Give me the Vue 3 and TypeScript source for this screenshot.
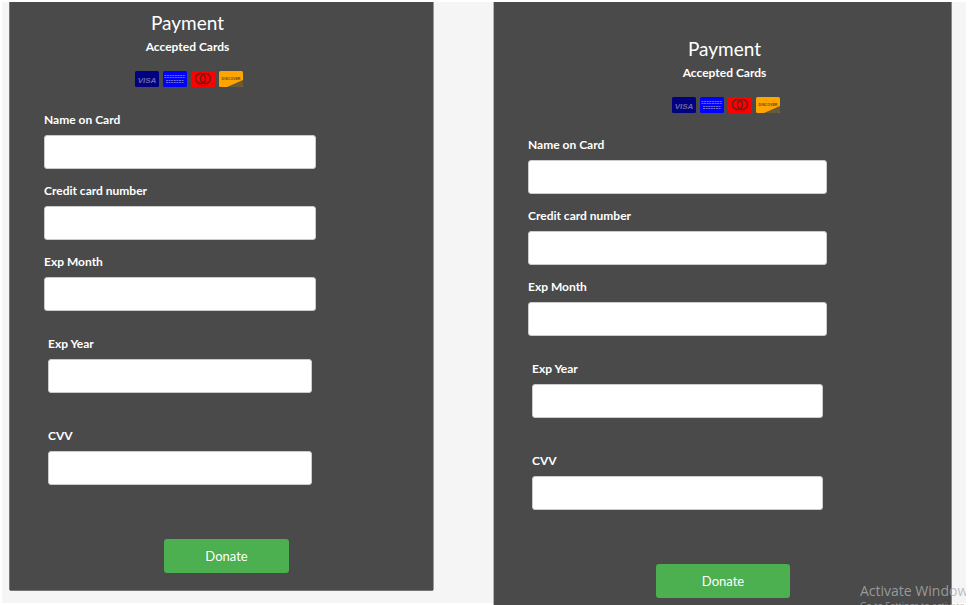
<script setup lang="ts">
interface Field { label: string; inset: boolean; cls: string }
const fields: Field[] = [
  { label: 'Name on Card', inset: false, cls: 'f1' },
  { label: 'Credit card number', inset: false, cls: 'f2' },
  { label: 'Exp Month', inset: false, cls: 'f3' },
  { label: 'Exp Year', inset: true, cls: 'f4' },
  { label: 'CVV', inset: true, cls: 'f5' },
]
const panels = ['left', 'right']
</script>

<template>
  <div class="page">
    <section v-for="p in panels" :key="p" class="panel" :class="p">
      <header class="head">
        <h1 class="title">Payment</h1>
        <p class="sub">Accepted Cards</p>
        <div class="cards">
          <svg class="card" viewBox="0 0 24 16" width="24" height="16">
            <rect width="24" height="16" rx="1.5" fill="#000080" />
            <text x="12" y="11.5" text-anchor="middle" class="visa">VISA</text>
          </svg>
          <svg class="card" viewBox="0 0 24 16" width="24" height="16">
            <rect width="24" height="16" rx="1.5" fill="#0000ff" />
            <path d="M1.5 4.5h21M1.5 6.5h21M3 9.5h18M3 11.5h18" stroke="#6a6ad8" stroke-width="1" stroke-dasharray="2 .6" />
          </svg>
          <svg class="card" viewBox="0 0 24 16" width="24" height="16">
            <rect width="24" height="16" rx="1.5" fill="#ff0000" />
            <circle cx="9.5" cy="7.5" r="5" fill="none" stroke="#6a1a1a" stroke-width="1.3" />
            <circle cx="14.5" cy="7.5" r="5" fill="none" stroke="#6a1a1a" stroke-width="1.3" />
            <path d="M7 14.3h10" stroke="#a01818" stroke-width=".8" />
          </svg>
          <svg class="card" viewBox="0 0 24 16" width="24" height="16">
            <rect width="24" height="16" rx="1.5" fill="#ffa500" />
            <path d="M8 16 24 9v5.5a1.5 1.5 0 0 1-1.5 1.5Z" fill="#6a5a3c" />
            <text x="12" y="8.5" text-anchor="middle" class="disc">DISCOVER</text>
          </svg>
        </div>
      </header>
      <div v-for="f in fields" :key="f.label" class="field" :class="[f.cls, { inset: f.inset }]">
        <label class="label">{{ f.label }}</label>
        <input class="input" type="text" />
      </div>
      <button class="donate" type="button">Donate</button>
    </section>
    <div class="watermark">
      <div class="wm1">Activate Windows</div>
      <div class="wm2">Go to Settings to activate Windows.</div>
    </div>
  </div>
</template>

<style scoped>
.page {
  position: relative;
  box-sizing: border-box;
  width: 968px;
  height: 605px;
  overflow: hidden;
  display: flex;
  align-items: flex-start;
  background: linear-gradient(#f5f5f5, #f5f5f5) 2px 2px / 964px 601px no-repeat #fff;
  font-family: Lato, "Liberation Sans", sans-serif;
  color: #fff;
}
.panel {
  box-sizing: border-box;
  flex: none;
  margin-top: 2px;
  background: #4a4a4a;
  display: flex;
  flex-direction: column;
  align-items: flex-start;
}
.panel.left {
  width: 423px;
  height: 588px;
  margin-left: 10px;
  padding: 10px 0 0 34px;
  box-shadow: -1px 0 0 #777, 1px 0 0 #999, 0 1px 0 #777;
}
.panel.right {
  width: 457px;
  height: 603px;
  margin-left: 61px;
  padding: 36px 0 0 34px;
  box-shadow: -1px 0 0 #b5b5b5, 1px 0 0 #888;
}
.head {
  display: flex;
  flex-direction: column;
  align-items: center;
}
.left .head { width: 287px; }
.right .head { width: 393px; }
.title {
  margin: 0;
  font-size: 19px;
  line-height: 21px;
  font-weight: 400;
}
.sub {
  margin: 6px 0 0;
  font-size: 12px;
  line-height: 16px;
  font-weight: 700;
}
.cards {
  display: flex;
  gap: 4px;
  margin: 16px 0 0 3px;
}
.card { display: block; }
.visa {
  font: italic 700 8px "Liberation Sans", sans-serif;
  fill: #6a6aa0;
}
.disc {
  font: 700 3.6px "Liberation Sans", sans-serif;
  fill: #5a4a20;
}
.field {
  display: flex;
  flex-direction: column;
  align-items: stretch;
}
.left .field { width: 272px; }
.right .field { width: 299px; }
.left .field.inset { width: 264px; margin-left: 4px; }
.right .field.inset { width: 291px; margin-left: 4px; }
.f1 { margin-top: 24px; }
.left .f1 { margin-top: 25px; }
.f2, .f3 { margin-top: 14px; }
.f4 { margin-top: 25px; }
.f5 { margin-top: 35px; }
.label {
  font-size: 12px;
  line-height: 16px;
  font-weight: 700;
  margin-bottom: 7px;
}
.input {
  box-sizing: border-box;
  height: 34px;
  border: 1px solid #ccc;
  border-radius: 3px;
  background: #fff;
  padding: 0;
}
.donate {
  height: 34px;
  border: 0;
  border-radius: 3px;
  background: #4caf50;
  color: #fff;
  font-family: inherit;
  font-size: 13px;
}
.left .donate { width: 125px; margin: 54px 0 0 120px; }
.right .donate { width: 134px; margin: 54px 0 0 128px; }
.watermark {
  position: absolute;
  left: 860px;
  top: 581px;
  width: 106px;
  overflow: hidden;
  white-space: nowrap;
  color: rgba(175, 175, 175, .8);
  font-family: "Open Sans", sans-serif;
}
.wm1 { font-size: 14px; line-height: 19px; }
.wm2 { font-size: 9px; line-height: 12px; }
</style>

<style>
html, body { margin: 0; background: #fff; }
</style>
